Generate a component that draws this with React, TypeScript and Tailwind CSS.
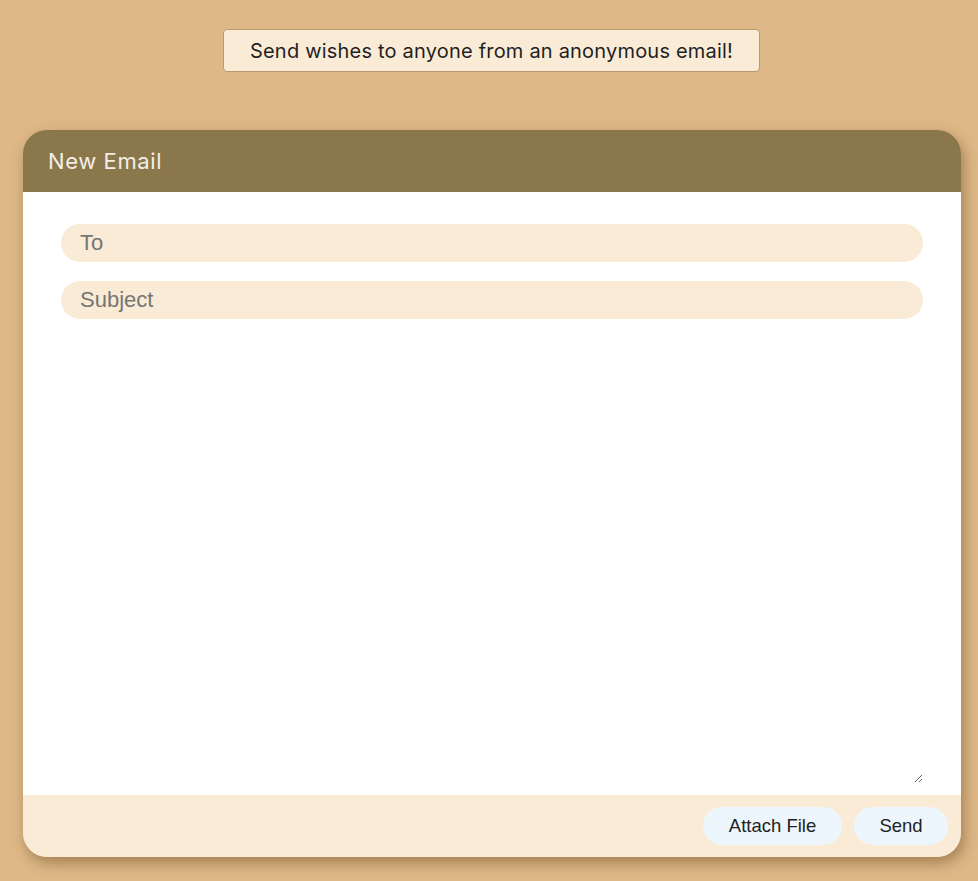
import React from 'react';

export default function App() {
  return (
    <div className="min-h-[881px] bg-[#deb887] pt-[29px] pb-6">
      {/* Banner */}
      <div className="flex justify-center">
        <div className="w-[537px] h-[43px] flex items-center justify-center ml-[5px] rounded-[4px] border border-[#b99a70] bg-[#faebd7] text-[20px] text-[#1f1f1f] font-['Inter',sans-serif] tracking-[0.2px]">
          Send wishes to anyone from an anonymous email!
        </div>
      </div>

      {/* Compose card */}
      <div className="ml-[23px] mt-[58px] w-[938px] rounded-[24px] overflow-hidden shadow-[3px_6px_14px_rgba(90,60,20,0.45)]">
        <div className="h-[62px] bg-[#8b774c] flex items-center pl-[25px]">
          <span className="text-[22px] text-[#f3efe6] font-['Inter',sans-serif] tracking-[0.6px]">New Email</span>
        </div>

        <div className="bg-white px-[38px] pt-[32px] pb-[12px] flex flex-col">
          <input
            type="text"
            placeholder="To"
            className="h-[38px] rounded-full bg-[#faebd7] px-[19px] text-[22px] font-['Liberation_Sans',Arial,sans-serif] placeholder-[#757575] outline-none"
          />
          <input
            type="text"
            placeholder="Subject"
            className="mt-[19px] h-[38px] rounded-full bg-[#faebd7] px-[19px] text-[22px] font-['Liberation_Sans',Arial,sans-serif] placeholder-[#757575] outline-none"
          />
          <textarea className="mt-[19px] h-[445px] resize-y outline-none font-['Liberation_Sans',Arial,sans-serif] text-[16px]" />
        </div>

        <div className="h-[62px] bg-[#faebd7] flex items-center justify-end gap-[12px] pr-[13px]">
          <button className="h-[38px] w-[139px] rounded-full bg-[#eef6fd] text-[18.5px] text-[#222] font-['Liberation_Sans',Arial,sans-serif]">
            Attach File
          </button>
          <button className="h-[38px] w-[94px] rounded-full bg-[#eef6fd] text-[18.5px] text-[#222] font-['Liberation_Sans',Arial,sans-serif]">
            Send
          </button>
        </div>
      </div>
    </div>
  );
}
